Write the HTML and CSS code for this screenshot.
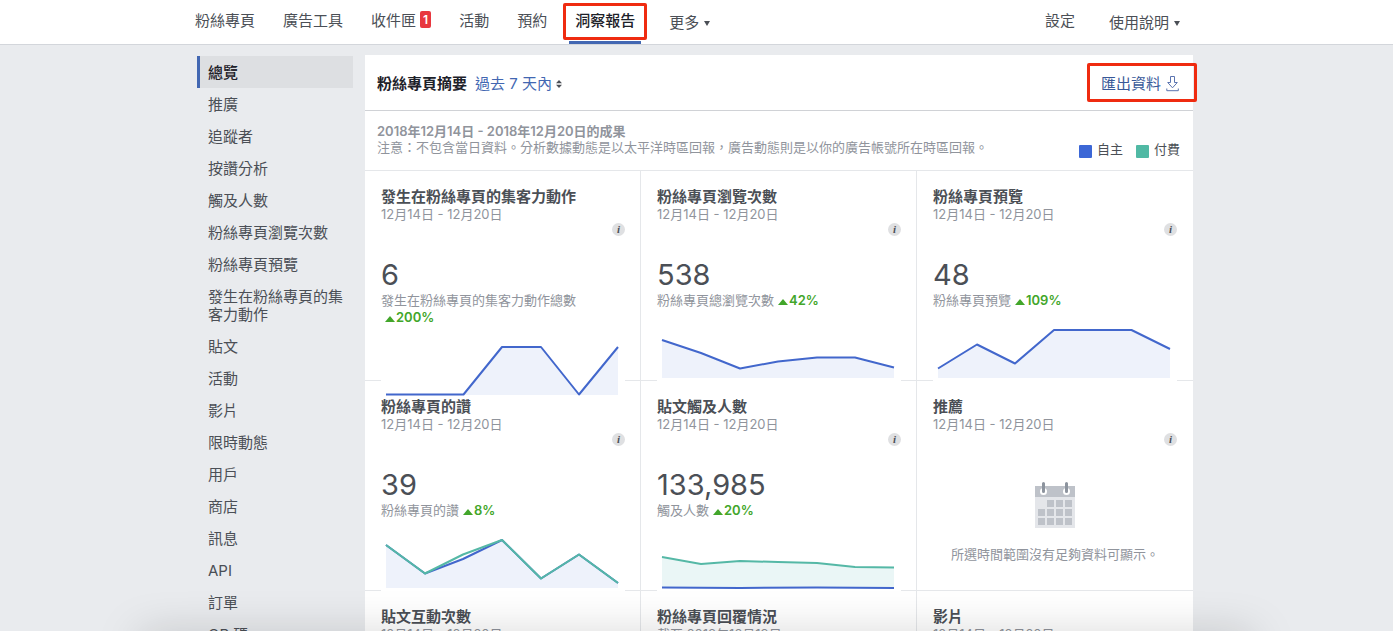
FILE: index.html
```
<!DOCTYPE html>
<html lang="zh-Hant">
<head>
<meta charset="utf-8">
<meta name="viewport" content="width=device-width, initial-scale=1">
<title>洞察報告</title>
<link rel="stylesheet" href="styles.css">
</head>
<body>
<header class="topbar">
  <div class="topbar-inner">
    <nav class="tabs">
      <a class="tab" href="#">粉絲專頁</a>
      <a class="tab" href="#">廣告工具</a>
      <a class="tab" href="#">收件匣<span class="badge">1</span></a>
      <a class="tab" href="#">活動</a>
      <a class="tab" href="#">預約</a>
      <a class="tab tab-active" href="#" aria-current="page">洞察報告</a>
      <button class="menu menu-more" type="button">更多<span class="caret"></span></button>
    </nav>
    <nav class="tabs tabs-right">
      <a class="tab" href="#">設定</a>
      <button class="menu" type="button">使用說明<span class="caret"></span></button>
    </nav>
  </div>
</header>

<div class="page">
  <nav class="sidebar">
    <a class="side-link side-active" href="#">總覽</a>
    <a class="side-link" href="#">推廣</a>
    <a class="side-link" href="#">追蹤者</a>
    <a class="side-link" href="#">按讚分析</a>
    <a class="side-link" href="#">觸及人數</a>
    <a class="side-link" href="#">粉絲專頁瀏覽次數</a>
    <a class="side-link" href="#">粉絲專頁預覽</a>
    <a class="side-link" href="#">發生在粉絲專頁的集客力動作</a>
    <a class="side-link" href="#">貼文</a>
    <a class="side-link" href="#">活動</a>
    <a class="side-link" href="#">影片</a>
    <a class="side-link" href="#">限時動態</a>
    <a class="side-link" href="#">用戶</a>
    <a class="side-link" href="#">商店</a>
    <a class="side-link" href="#">訊息</a>
    <a class="side-link" href="#">API</a>
    <a class="side-link" href="#">訂單</a>
    <a class="side-link" href="#">QR 碼</a>
  </nav>

  <main class="panel">
    <div class="panel-head">
      <h1 class="panel-title">粉絲專頁摘要</h1>
      <button class="range" type="button">過去 7 天內
        <svg class="range-icon" width="6" height="8" viewBox="0 0 6 8" aria-hidden="true"><path d="M0 3.3L3 0l3 3.3zM0 4.7h6L3 8z" fill="#4b4f56"/></svg>
      </button>
      <button class="export" type="button">匯出資料
        <svg class="export-icon" width="14" height="17" viewBox="0 0 14 17" aria-hidden="true"><path d="M4.500 1.500h4v6h2.800L6.500 12.800 1.700 7.500h2.800zM.8 13.500v2.200h11.500v-2.200" fill="none" stroke="#5b74b0" stroke-width="1"/></svg>
      </button>
    </div>

    <div class="notice">
      <div class="notice-text">
        <p class="notice-line notice-strong">2018年12月14日 - 2018年12月20日的成果</p>
        <p class="notice-line">注意：不包含當日資料。分析數據動態是以太平洋時區回報，廣告動態則是以你的廣告帳號所在時區回報。</p>
      </div>
      <div class="legend">
        <span class="key"><span class="swatch swatch-organic"></span>自主</span>
        <span class="key"><span class="swatch swatch-paid"></span>付費</span>
      </div>
    </div>

    <div class="cards">
      <section class="card">
        <h2 class="card-title">發生在粉絲專頁的集客力動作</h2>
        <p class="card-date">12月14日 - 12月20日</p>
        <button class="info" type="button" aria-label="說明">i</button>
        <p class="value">6</p>
        <p class="metric">發生在粉絲專頁的集客力動作總數<span class="delta">200%</span></p>
        <svg class="chart" width="244" height="64" viewBox="0 0 244 64"><path class="area" d="M5 57H83L121 9H160L198 57L237 9V57z"/><path class="line" d="M5 56.500H82.500L121 9H160L198 56.500L237 9"/></svg>
      </section>
      <section class="card">
        <h2 class="card-title">粉絲專頁瀏覽次數</h2>
        <p class="card-date">12月14日 - 12月20日</p>
        <button class="info" type="button" aria-label="說明">i</button>
        <p class="value">538</p>
        <p class="metric">粉絲專頁總瀏覽次數<span class="delta">42%</span></p>
        <svg class="chart" width="244" height="64" viewBox="0 0 244 64"><path class="area" d="M5 19L44 32L83 47.500L121 40.500L160 36.500H198L237 46.500V57H5z"/><path class="line" d="M5 19L44 32L83 47.500L121 40.500L160 36.500H198L237 46.500"/></svg>
      </section>
      <section class="card">
        <h2 class="card-title">粉絲專頁預覽</h2>
        <p class="card-date">12月14日 - 12月20日</p>
        <button class="info" type="button" aria-label="說明">i</button>
        <p class="value">48</p>
        <p class="metric">粉絲專頁預覽<span class="delta">109%</span></p>
        <svg class="chart" width="244" height="64" viewBox="0 0 244 64"><path class="area" d="M5 47.500L44 23.500L82 42.500L121 9H198.500L237 28V57H5z"/><path class="line" d="M5 47.500L44 23.500L82 42.500L121 9H198.500L237 28"/></svg>
      </section>
      <section class="card">
        <h2 class="card-title">粉絲專頁的讚</h2>
        <p class="card-date">12月14日 - 12月20日</p>
        <button class="info" type="button" aria-label="說明">i</button>
        <p class="value">39</p>
        <p class="metric">粉絲專頁的讚<span class="delta">8%</span></p>
        <svg class="chart" width="244" height="64" viewBox="0 0 244 64"><path class="area" d="M5 14L44 42.500L82 28L121 9L160 47.500L198 23.500L237 52V57H5z"/><path class="line" d="M5 14L44 42.500L82 28L121 9L160 47.500L198 23.500L237 52"/><path class="line line-paid" d="M5 14L44 42.500L82 23.500L121 9L160 47.500L198 23.500L237 52"/></svg>
      </section>
      <section class="card">
        <h2 class="card-title">貼文觸及人數</h2>
        <p class="card-date">12月14日 - 12月20日</p>
        <button class="info" type="button" aria-label="說明">i</button>
        <p class="value">133,985</p>
        <p class="metric">觸及人數<span class="delta">20%</span></p>
        <svg class="chart" width="244" height="64" viewBox="0 0 244 64"><path class="area area-paid" d="M5 26L44 33L83 30L160 32L198 36L237 36.500V57H5z"/><path class="line line-paid" d="M5 26L44 33L83 30L121 31L160 32L198 36L237 36.500"/><path class="line" d="M5 56.500L83 57L160 56.500L237 57"/></svg>
      </section>
      <section class="card">
        <h2 class="card-title">推薦</h2>
        <p class="card-date">12月14日 - 12月20日</p>
        <button class="info" type="button" aria-label="說明">i</button>
        <div class="empty">
          <svg class="calendar" width="40" height="46" viewBox="0 0 40 46" aria-hidden="true">
            <path d="M0 4h40v42H0z" fill="#e4e6ea"/><path d="M0 4h40v11H0z" fill="#bec2c9"/>
            <circle cx="8.500" cy="9.500" r="3.500" fill="#fff"/><circle cx="31.500" cy="9.500" r="3.500" fill="#fff"/>
            <path d="M8.500 1.500v8M31.500 1.500v8" stroke="#8d949e" stroke-width="3" stroke-linecap="round"/>
            <path d="M12 18h7v7h-7zM21 18h7v7h-7zM30 18h7v7h-7zM3 27h7v7H3zM12 27h7v7h-7zM21 27h7v7h-7zM30 27h7v7h-7zM3 36h7v7H3zM12 36h7v7h-7zM21 36h7v7h-7zM30 36h7v7h-7z" fill="#bec2c9"/>
          </svg>
          <p class="empty-text">所選時間範圍沒有足夠資料可顯示。</p>
        </div>
      </section>
      <section class="card">
        <h2 class="card-title">貼文互動次數</h2>
        <p class="card-date">12月14日 - 12月20日</p>
      </section>
      <section class="card">
        <h2 class="card-title">粉絲專頁回覆情況</h2>
        <p class="card-date">截至 2018年12月19日</p>
      </section>
      <section class="card">
        <h2 class="card-title">影片</h2>
        <p class="card-date">12月14日 - 12月20日</p>
      </section>
    </div>
  </main>
</div>
<div class="bottom-shade"></div>
</body>
</html>
```

FILE: styles.css
```
* { box-sizing: border-box; }
html { height: 100%; }
body {
  margin: 0;
  height: 100%;
  overflow: hidden;
  background: #e9ebee;
  color: #4b4f56;
  font-family: Inter, "Noto Sans CJK TC", sans-serif;
  font-size: 15px;
  line-height: 18px;
}
h1, h2, p { margin: 0; }
a { color: inherit; text-decoration: none; }
button {
  padding: 0;
  border: 0;
  background: none;
  color: inherit;
  font: inherit;
  cursor: pointer;
}

.topbar { background: #fff; border-bottom: 1px solid #d3d6db; }
.topbar-inner {
  display: flex;
  justify-content: space-between;
  max-width: 1003px;
  height: 44px;
  margin: 0 auto;
  padding-right: 18px;
}
.tabs { display: flex; gap: 28px; }
.tabs-right { gap: 34px; }
.tab {
  position: relative;
  display: flex;
  align-items: center;
  padding-bottom: 3px;
  white-space: nowrap;
}
.badge {
  margin: 0 0 3px 4px;
  padding: 0 3px;
  border-radius: 2px;
  background: #e8373f;
  color: #fff;
  font-size: 12px;
  font-weight: 600;
  line-height: 17px;
}
.tab-active { color: #1d2129; font-weight: 500; }
.tab-active::before {
  content: "";
  position: absolute;
  inset: 3px -12px 4px;
  border: 3px solid #ef2b10;
  border-radius: 2px;
}
.tab-active::after {
  content: "";
  position: absolute;
  inset: auto -6px 0;
  height: 3px;
  background: #4267b2;
}
.menu { display: flex; align-items: center; padding-top: 2px; white-space: nowrap; }
.menu-more { margin-left: 6px; }
.caret {
  margin: 1px 0 0 5px;
  border: 3px solid transparent;
  border-top: 5px solid #4b4f56;
  border-bottom: 0;
}

.page {
  display: flex;
  align-items: flex-start;
  gap: 12px;
  max-width: 999px;
  margin: 0 auto;
  padding: 10px 3px 0 0;
}
.sidebar { flex: 0 0 156px; padding-top: 1px; }
.side-link {
  display: block;
  padding: 8px 0 6px 8px;
  border-left: 3px solid transparent;
}
.side-active {
  border-color: #4267b2;
  background: #dddfe2;
  color: #1d2129;
  font-weight: 500;
}

.panel { flex: 1; min-width: 0; background: #fff; }
.panel-head {
  display: flex;
  align-items: center;
  height: 56px;
  padding-left: 12px;
  border-bottom: 1px solid #d0d2d6;
  white-space: nowrap;
}
.panel-title {
  margin-right: 8px;
  padding-top: 2px;
  color: #1d2129;
  font-size: 15px;
  font-weight: 600;
}
.range, .export {
  display: flex;
  align-items: center;
  padding-top: 2px;
  color: #4267b2;
}
.range-icon { margin-left: 4px; }
.export {
  margin: 0 -4px 0 auto;
  height: 39px;
  padding: 2px 14px 0 11px;
  border: 3px solid #ef2b10;
  border-radius: 2px;
  color: #385898;
}
.export-icon { margin-left: 5px; }

.notice {
  display: flex;
  justify-content: space-between;
  height: 60px;
  padding: 12px 13px 0 12px;
  border-bottom: 1px solid #e5e7ea;
  font-size: 13px;
}
.notice-line { color: #90949c; line-height: 16px; }
.notice-strong { font-weight: 600; }
.legend { display: flex; gap: 13px; padding-top: 17px; white-space: nowrap; }
.key { display: flex; gap: 5px; }
.swatch { width: 13px; height: 13px; margin-top: 5px; border-radius: 1px; }
.swatch-organic { background: #3c67d6; }
.swatch-paid { background: #50b9a4; }

.cards {
  display: grid;
  grid-template-columns: repeat(3, 1fr);
  grid-auto-rows: 210px;
}
.card {
  display: flex;
  flex-direction: column;
  min-width: 0;
  padding: 17px 15px 0 16px;
  border-right: 1px solid #e5e7ea;
  border-bottom: 1px solid #e5e7ea;
}
.card:nth-child(3n) { border-right: 0; padding-right: 16px; }
.card-title { font-size: 15px; font-weight: 600; line-height: 18px; }
.card-date { color: #90949c; font-size: 13px; line-height: 17px; }
.info {
  align-self: flex-end;
  width: 13px;
  height: 13px;
  border-radius: 50%;
  background: #dfe0e2;
  color: #4b4f56;
  font: italic bold 11px/13px "Liberation Serif", serif;
}
.value {
  margin-top: 21px;
  font-size: 29px;
  line-height: 35px;
}
.metric { color: #90949c; font-size: 13px; line-height: 17px; }
.delta {
  display: inline-block;
  margin-left: 4px;
  color: #42a62a;
  font-weight: 600;
}
.delta::before {
  content: "";
  display: inline-block;
  margin-right: 1px;
  border: 5px solid transparent;
  border-top: 0;
  border-bottom: 6px solid #42a62a;
}
.chart { flex: none; margin-top: 12px; background: #fff; }
.area { fill: #eef2fb; }
.area-paid { fill: #eaf6f6; }
.line { fill: none; stroke: #4267cc; stroke-width: 2; stroke-linejoin: round; }
.line-paid { stroke: #55b8a6; }
.empty {
  display: flex;
  flex-direction: column;
  align-items: center;
  gap: 17px;
  margin-top: 36px;
}
.empty-text { color: #90949c; font-size: 13px; }

.bottom-shade {
  position: fixed;
  right: 140px;
  bottom: -20px;
  left: 140px;
  height: 20px;
  box-shadow: 0 6px 44px rgba(0, 0, 0, 0.26);
  pointer-events: none;
}
```
